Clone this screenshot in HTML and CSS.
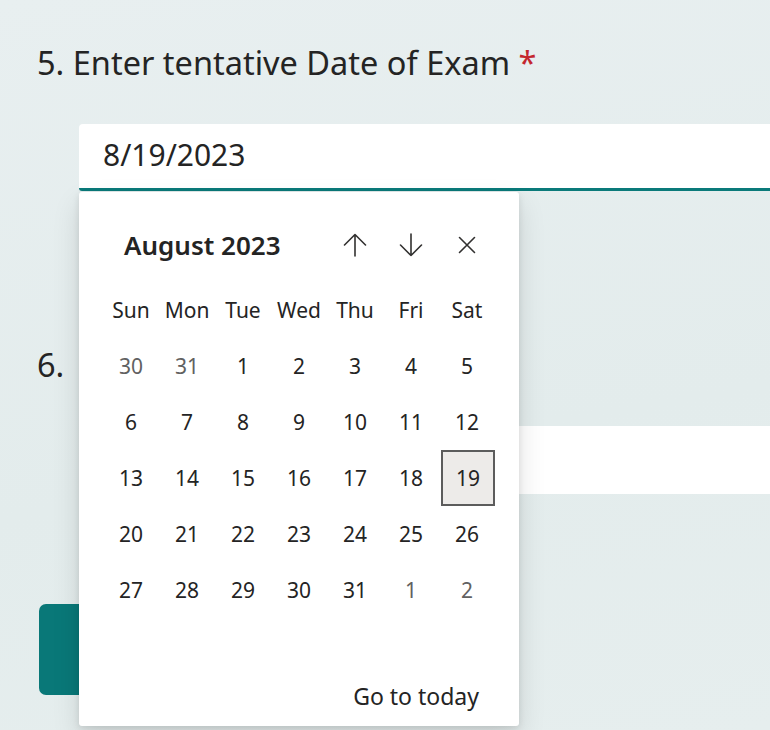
FILE: index.html
```html
<!DOCTYPE html>
<html lang="en">
<head>
<meta charset="utf-8">
<title>Date of Exam</title>
<link rel="stylesheet" href="styles.css">
</head>
<body>
<main class="page">
  <section class="question">
    <h2 class="q-title"><span class="q-num">5.</span> Enter tentative Date of Exam <span class="req">*</span></h2>
    <div class="field field-active">
      <span class="field-value">8/19/2023</span>
    </div>
  </section>
  <section class="question question-6">
    <h2 class="q-title"><span class="q-num">6.</span></h2>
    <div class="field field-plain"></div>
  </section>
  <div class="submit"></div>

  <div class="picker" role="dialog" aria-label="Calendar">
    <div class="picker-head">
      <div class="month">August 2023</div>
      <div class="nav">
        <button class="nav-btn" aria-label="Previous month">
          <svg width="26" height="26" viewBox="0 0 26 26"><path d="M13 24V2.5M2.5 13L13 2.5L23.5 13" fill="none" stroke="#323130" stroke-width="1.6" stroke-linecap="round" stroke-linejoin="round"/></svg>
        </button>
        <button class="nav-btn" aria-label="Next month">
          <svg width="26" height="26" viewBox="0 0 26 26"><path d="M13 2V23.5M2.5 13L13 23.5L23.5 13" fill="none" stroke="#323130" stroke-width="1.6" stroke-linecap="round" stroke-linejoin="round"/></svg>
        </button>
        <button class="nav-btn" aria-label="Close">
          <svg width="18" height="18" viewBox="0 0 18 18"><path d="M1.5 1.5L16.5 16.5M16.5 1.5L1.5 16.5" fill="none" stroke="#323130" stroke-width="1.6" stroke-linecap="round"/></svg>
        </button>
      </div>
    </div>
    <div class="grid">
      <div class="wd">Sun</div><div class="wd">Mon</div><div class="wd">Tue</div><div class="wd">Wed</div><div class="wd">Thu</div><div class="wd">Fri</div><div class="wd">Sat</div>
      <div class="d out">30</div><div class="d out">31</div><div class="d">1</div><div class="d">2</div><div class="d">3</div><div class="d">4</div><div class="d">5</div>
      <div class="d">6</div><div class="d">7</div><div class="d">8</div><div class="d">9</div><div class="d">10</div><div class="d">11</div><div class="d">12</div>
      <div class="d">13</div><div class="d">14</div><div class="d">15</div><div class="d">16</div><div class="d">17</div><div class="d">18</div><div class="d"><span class="sel">19</span></div>
      <div class="d">20</div><div class="d">21</div><div class="d">22</div><div class="d">23</div><div class="d">24</div><div class="d">25</div><div class="d">26</div>
      <div class="d">27</div><div class="d">28</div><div class="d">29</div><div class="d">30</div><div class="d">31</div><div class="d out">1</div><div class="d out">2</div>
    </div>
    <div class="picker-foot"><span class="today">Go to today</span></div>
  </div>
</main>
</body>
</html>
```

FILE: styles.css
```css
html, body {
  margin: 0;
  height: 100%;
}
body {
  background: linear-gradient(170deg, #e8eff0 0%, #e3ecec 60%, #e6eeee 100%);
  font-family: "Noto Sans", "Open Sans", sans-serif;
  color: #242424;
  overflow: hidden;
}
.page {
  position: relative;
  padding: 43px 0 0 37px;
  height: 730px;
  box-sizing: border-box;
}
.question {
  display: flex;
  flex-direction: column;
}
.q-title {
  margin: 0;
  font-weight: 400;
  font-size: 32.5px;
  line-height: 40px;
  height: 40px;
  color: #242424;
  white-space: nowrap;
}
.req {
  color: #c4262e;
}
.field {
  margin-left: 42px;
  background: #fff;
  border-radius: 4px 0 0 0;
  box-sizing: border-box;
}
.field-active {
  margin-top: 41px;
  height: 67px;
  border-bottom: 3px solid #0a7a7a;
  border-radius: 4px 0 0 3px;
  display: flex;
  align-items: center;
  padding: 0 0 3px 24px;
}
.field-value {
  font-size: 30px;
  color: #242424;
}
.question-6 {
  margin-top: 154px;
}
.field-plain {
  margin-top: 41px;
  height: 68px;
}
.submit {
  margin-top: 110px;
  margin-left: 2px;
  width: 130px;
  height: 91px;
  border-radius: 7px;
  background: #097878;
}
.picker {
  position: absolute;
  left: 79px;
  top: 192px;
  width: 440px;
  height: 534px;
  box-sizing: border-box;
  background: #fff;
  border-radius: 3px;
  box-shadow: 0 12px 28px rgba(0,0,0,0.12), 0 2px 7px rgba(0,0,0,0.1);
  padding: 25px 24px 0 24px;
  display: flex;
  flex-direction: column;
}
.picker-head {
  display: flex;
  align-items: center;
  justify-content: space-between;
  height: 56px;
}
.month {
  padding-left: 21px;
  font-size: 26px;
  font-weight: 600;
  color: #242424;
}
.nav {
  display: flex;
}
.nav-btn {
  width: 56px;
  height: 56px;
  padding: 0;
  border: 0;
  background: transparent;
  display: flex;
  align-items: center;
  justify-content: center;
}
.grid {
  margin-top: 9px;
  display: grid;
  grid-template-columns: repeat(7, 56px);
  grid-auto-rows: 56px;
}
.wd, .d {
  display: flex;
  align-items: center;
  justify-content: center;
  font-size: 21px;
  color: #242424;
}
.d.out {
  color: #616161;
}
.sel {
  width: 54px;
  height: 56px;
  box-sizing: border-box;
  border: 2px solid #5c5c5c;
  background: #edebe9;
  display: flex;
  align-items: center;
  justify-content: center;
  margin-left: 2px;
}
.picker-foot {
  margin-top: auto;
  height: 56px;
  display: flex;
  align-items: center;
  justify-content: flex-end;
  padding-right: 16px;
  padding-bottom: 2px;
}
.today {
  font-size: 23px;
  color: #242424;
}
```
